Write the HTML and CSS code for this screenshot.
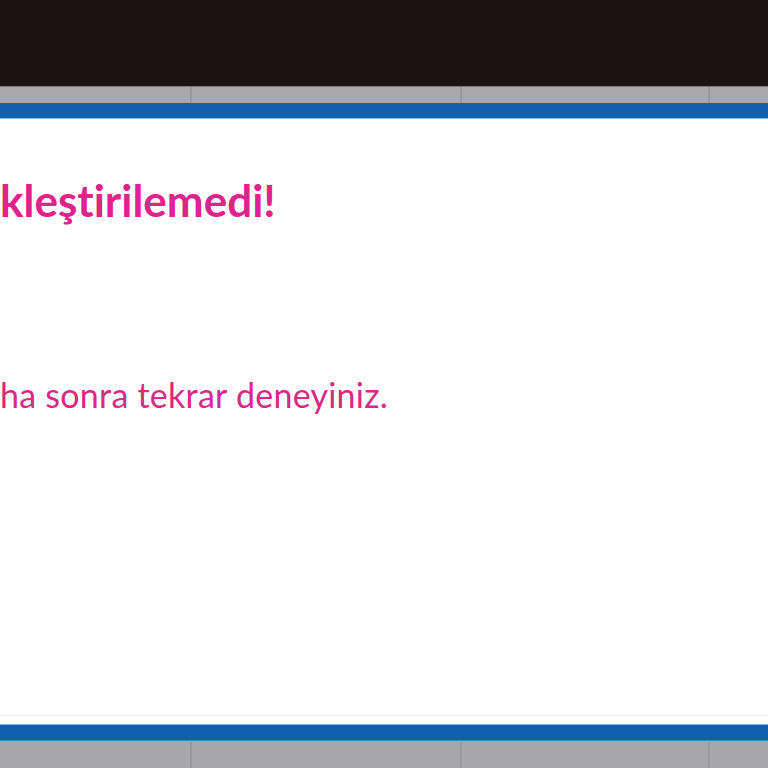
FILE: index.html
```html
<!DOCTYPE html>
<html lang="tr">
<head>
<meta charset="utf-8">
<link rel="stylesheet" href="styles.css">
</head>
<body>
<div class="page">
  <div class="topbar"></div>
  <div class="tabs">
    <div class="tab t1"></div>
    <div class="tab t2"></div>
    <div class="tab t3"></div>
    <div class="tab t4"></div>
  </div>
  <div class="blue"></div>
  <main class="content">
    <h1 class="title">kleştirilemedi!</h1>
    <p class="msg">ha sonra tekrar deneyiniz.</p>
    <div class="fade"></div>
  </main>
  <div class="blue bottom"></div>
  <div class="tabs foot">
    <div class="tab t1"></div>
    <div class="tab t2"></div>
    <div class="tab t3"></div>
    <div class="tab t4"></div>
  </div>
</div>
</body>
</html>
```
FILE: styles.css
```css
html, body { margin: 0; padding: 0; }
body { width: 768px; height: 768px; overflow: hidden; background: #fff; font-family: "Lato", "Noto Sans", sans-serif; }
.page { display: flex; flex-direction: column; height: 768px; }
.topbar { height: 86px; background: #1a1110; flex: none; }
.tabs { height: 17px; display: flex; flex: none; background: #a9a7aa; border-top: 1px solid #7c7a7c; box-sizing: border-box; }
.tabs .tab { border-right: 2px solid #9a989a; }
.tab.t1 { width: 190px; }
.tab.t2 { width: 268px; }
.tab.t3 { width: 246px; }
.tab.t4 { flex: 1; border-right: none; }
.blue { height: 15px; background: #1160ad; flex: none; border-bottom: 1px solid #8ab8e8; }
.blue.bottom { height: 15px; border-top: 1px solid #8ab8e8; border-bottom: 1px solid #4d7fb0; }
.tabs.foot { height: 27px; border-top: 1px solid #b59c9c; background: #a7a7a9; }
.content { flex: 1; display: flex; flex-direction: column; position: relative; overflow: hidden; }
.title { margin: 59px 0 0 0; font-size: 44px; font-weight: 700; color: #e0228b; line-height: 1; font-variant-ligatures: none; white-space: nowrap; }
.msg { margin: 156px 0 0 0; font-size: 34px; font-weight: 400; color: #d62a86; line-height: 1; letter-spacing: 0.25px; font-variant-ligatures: none; white-space: nowrap; }
.fade { position: absolute; left: 0; right: 0; bottom: 8px; height: 1px; background: #f0f0f0; }
```
